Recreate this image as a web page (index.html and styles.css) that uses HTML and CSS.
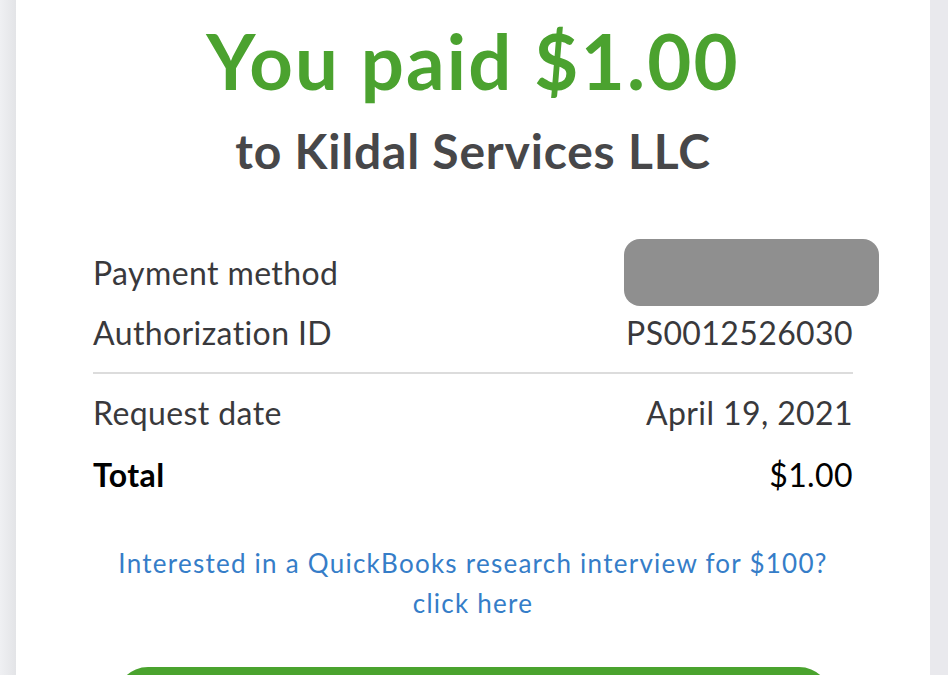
FILE: index.html
```html
<!DOCTYPE html>
<html lang="en">
<head>
<meta charset="utf-8">
<title>Payment receipt</title>
<link rel="stylesheet" href="styles.css">
</head>
<body>
<main class="card">
  <h1 class="title">You paid $1.00</h1>
  <h2 class="subtitle">to Kildal Services LLC</h2>
  <section class="details">
    <div class="row">
      <span class="label">Payment method</span>
      <span class="redacted"></span>
    </div>
    <div class="row">
      <span class="label">Authorization ID</span>
      <span class="value">PS0012526030</span>
    </div>
    <hr class="divider">
    <div class="row">
      <span class="label">Request date</span>
      <span class="value">April 19, 2021</span>
    </div>
    <div class="row total">
      <span class="label">Total</span>
      <span class="value">$1.00</span>
    </div>
  </section>
  <p class="promo"><a href="#">Interested in a QuickBooks research interview for $100?<br>click here</a></p>
  <div class="button"></div>
</main>
</body>
</html>
```

FILE: styles.css
```css
html, body {
  margin: 0;
  padding: 0;
  height: 100%;
  overflow: hidden;
}
body {
  background: linear-gradient(to right, #eff0f3 0, #e3e4e7 16px, #e9e9ed 16px);
  font-family: "Lato", "Liberation Sans", sans-serif;
}
.card {
  margin-left: 16px;
  width: 914px;
  min-height: 100%;
  background: #fff;
  box-sizing: border-box;
  padding: 16px 77px 0;
  display: flex;
  flex-direction: column;
}
.title {
  margin: 0;
  text-align: center;
  color: #4ba22f;
  font-size: 76px;
  line-height: 90px;
  font-weight: 700;
  letter-spacing: 2.2px;
}
.subtitle {
  margin: 17px 0 0;
  text-align: center;
  color: #474749;
  font-size: 48px;
  line-height: 56px;
  font-weight: 700;
  letter-spacing: 0.8px;
}
.details {
  margin-top: 64px;
  display: flex;
  flex-direction: column;
}
.row {
  display: flex;
  justify-content: space-between;
  align-items: center;
  font-size: 32px;
  line-height: 60px;
  color: #39393c;
  letter-spacing: 0.4px;
}
.redacted {
  width: 255px;
  height: 67px;
  margin: -4px -26px -3px 0;
  border-radius: 16px;
  background: #8f8f8f;
}
.divider {
  border: 0;
  border-top: 2px solid #dcdcdc;
  margin: 9px 0 9px;
}
.total {
  margin-top: 2px;
  color: #000;
}
.total .label {
  font-weight: 700;
}
.promo {
  margin: 38px 0 0;
  text-align: center;
  font-size: 26px;
  line-height: 40px;
  letter-spacing: 1.25px;
}
.promo a {
  color: #357dc8;
  text-decoration: none;
}
.button {
  margin: 44px auto 0;
  width: 715px;
  height: 64px;
  border-radius: 32px;
  background: #4aa32e;
}
```
